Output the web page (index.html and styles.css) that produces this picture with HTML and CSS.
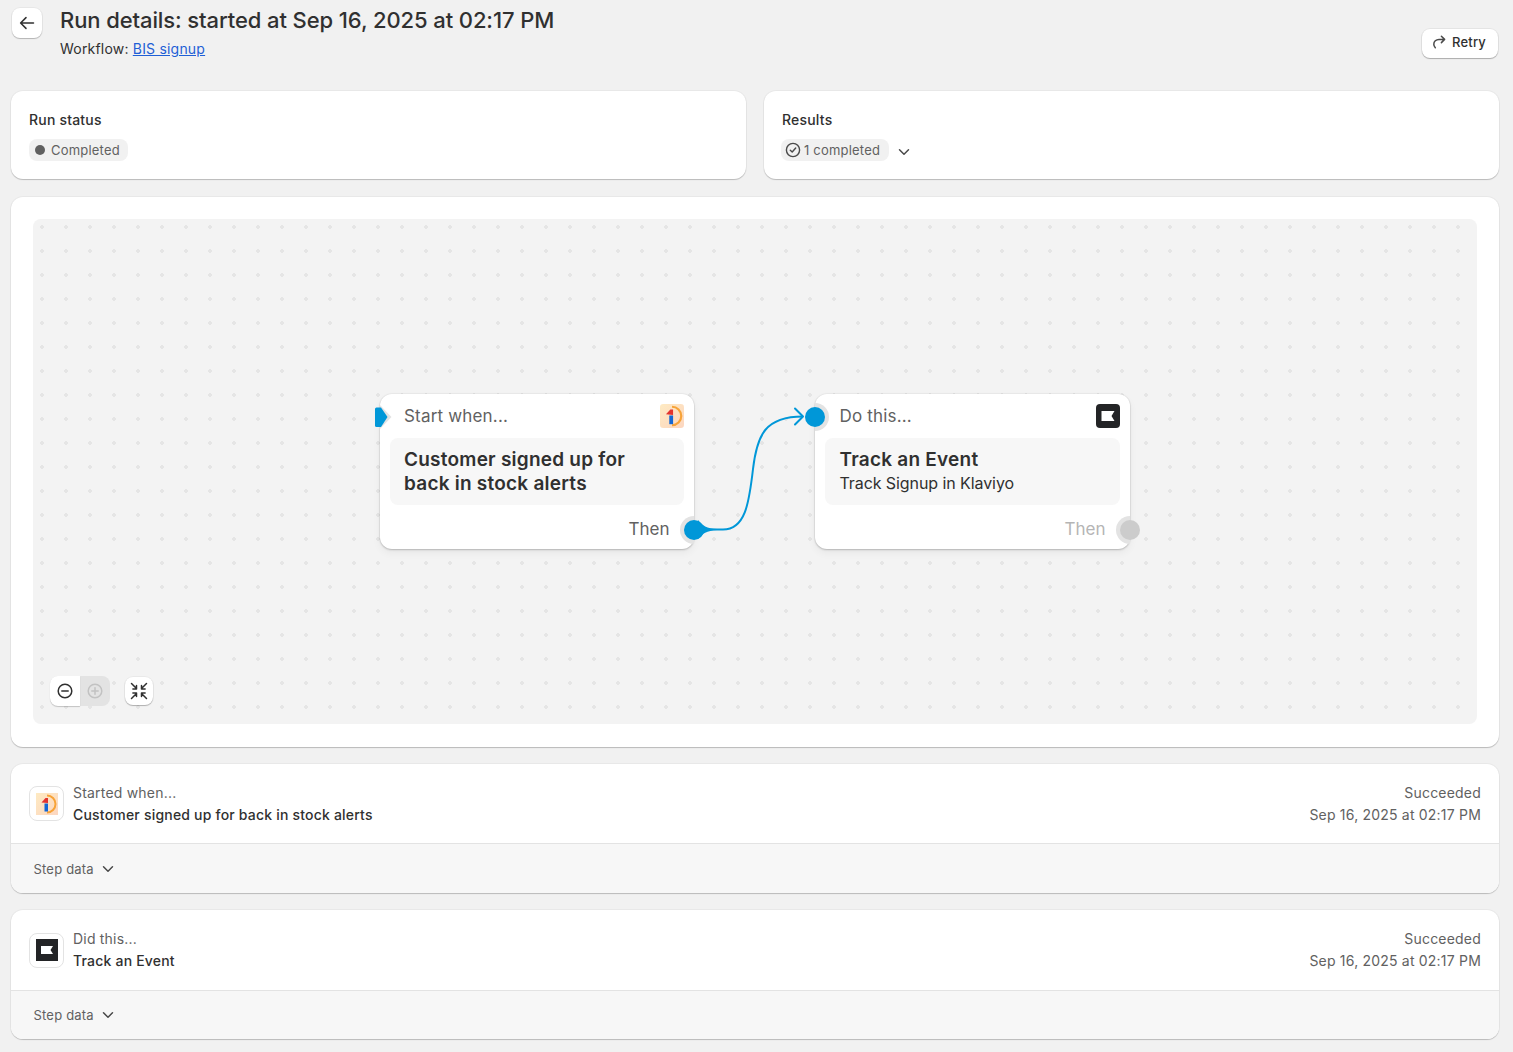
FILE: index.html
```html
<!DOCTYPE html>
<html lang="en">
<head>
<meta charset="utf-8">
<title>Run details</title>
<link rel="stylesheet" href="styles.css">
</head>
<body>
<main class="page">
  <header class="top">
    <button class="back" aria-label="Back">
      <svg viewBox="0 0 20 20" width="20" height="20"><path d="M16.500 10H3.800M9 4.600 3.600 10 9 15.400" fill="none" stroke="#303030" stroke-width="1.500" stroke-linecap="round" stroke-linejoin="round"/></svg>
    </button>
    <div class="heading">
      <h1>Run details: started at Sep 16, 2025 at 02:17 PM</h1>
      <p>Workflow: <a href="#">BIS signup</a></p>
    </div>
    <button class="retry">
      <svg viewBox="0 0 16 16" width="16" height="16"><path d="M13.400 5.400H8C5 5.400 2.800 7.500 2.800 10.200c0 1.400.6 2.600 1.500 3.500M10.400 2.200l3.200 3.200-3.200 3.200" fill="none" stroke="#4a4a4a" stroke-width="1.500" stroke-linecap="round" stroke-linejoin="round"/></svg>
      Retry
    </button>
  </header>

  <section class="summary">
    <div class="card info">
      <h2>Run status</h2>
      <div class="badge-row"><span class="badge"><i class="dot"></i>Completed</span></div>
    </div>
    <div class="card info">
      <h2>Results</h2>
      <div class="badge-row">
        <span class="badge badge-check">
          <svg viewBox="0 0 16 16" width="16" height="16"><circle cx="8" cy="8" r="6.600" fill="none" stroke="#4a4a4a" stroke-width="1.400"/><path d="M5.300 8.200 7.200 10l3.500-4" fill="none" stroke="#4a4a4a" stroke-width="1.400" stroke-linecap="round" stroke-linejoin="round"/></svg>1 completed
        </span>
        <svg class="chev" viewBox="0 0 12 8" width="12" height="8"><path d="M1.500 1.700 6 6.200l4.500-4.500" fill="none" stroke="#4a4a4a" stroke-width="1.500" stroke-linecap="round" stroke-linejoin="round"/></svg>
      </div>
    </div>
  </section>

  <section class="card canvas-card">
    <div class="canvas">
      <svg class="wire" width="1444" height="505" viewBox="0 0 1444 505">
        <path d="M662 310.500H690C712 310.500 716 285 720 250 724 216 732 197.500 770 197.500" fill="none" stroke="#0097d8" stroke-width="2"/>
        <path d="M665 301C669 306 674 310 684 310V311C674 311.500 669 315 665 320z" fill="#0097d8"/>
        <path d="M762 189.500l8 8-8 8" fill="none" stroke="#0097d8" stroke-width="2" stroke-linecap="round" stroke-linejoin="round"/>
      </svg>

      <article class="node node-start">
        <svg class="tag" viewBox="0 0 20 28" width="20" height="28"><path d="M7 2 18.500 14 7 26z" fill="#e3e3e3"/><path d="M3.500 4.500H8L14.500 14 8 24H3.500A1.500 1.500 0 0 1 2 22.500V6A1.500 1.500 0 0 1 3.500 4.500z" fill="#0097d8"/></svg>
        <div class="node-head">
          <span>Start when...</span>
          <svg class="app" viewBox="0 0 22 22" width="24" height="24"><defs><linearGradient id="logo-a" x1="0" y1="0" x2="1" y2="1"><stop offset="0" stop-color="#feeac2"/><stop offset="1" stop-color="#fcd6c0"/></linearGradient></defs><rect width="22" height="22" rx="3" fill="url(#logo-a)"/><path d="M11 2.500a8.500 8.500 0 1 1 0 17" fill="none" stroke="#f7a338" stroke-width="2"/><path d="M5.500 9.500 9.500 5H12v5z" fill="#e2332e"/><rect x="8.500" y="10.500" width="3.500" height="8" fill="#1467d4"/></svg>
        </div>
        <div class="node-body"><strong>Customer signed up for<br>back in stock alerts</strong></div>
        <div class="node-foot"><span>Then</span></div>
        <span class="port port-out"><i></i></span>
      </article>

      <article class="node node-do">
        <span class="port port-in"><i></i></span>
        <div class="node-head">
          <span>Do this...</span>
          <svg class="app" viewBox="0 0 24 24" width="24" height="24"><rect width="24" height="24" rx="4" fill="#232426"/><path d="M5.500 7h13l-3 5 3 5h-13z" fill="#fff"/></svg>
        </div>
        <div class="node-body"><strong>Track an Event</strong><em>Track Signup in Klaviyo</em></div>
        <div class="node-foot muted"><span>Then</span></div>
        <span class="port port-out off"><i></i></span>
      </article>

      <div class="zoom-group">
        <button class="zoom-btn" aria-label="Zoom out">
          <svg viewBox="0 0 20 20" width="20" height="20"><circle cx="10" cy="10" r="6.800" fill="none" stroke="#303030" stroke-width="1.500"/><path d="M6.800 10h6.400" stroke="#303030" stroke-width="1.500" stroke-linecap="round"/></svg>
        </button>
        <button class="zoom-btn off" aria-label="Zoom in">
          <svg viewBox="0 0 20 20" width="20" height="20"><circle cx="10" cy="10" r="6.800" fill="none" stroke="#c2c2c2" stroke-width="1.500"/><path d="M6.800 10h6.400M10 6.800v6.400" stroke="#c2c2c2" stroke-width="1.500" stroke-linecap="round"/></svg>
        </button>
      </div>
      <button class="fit" aria-label="Fit">
        <svg viewBox="0 0 20 20" width="20" height="20"><g fill="none" stroke="#303030" stroke-width="1.500" stroke-linecap="round" stroke-linejoin="round"><path d="M2.500 2.500 7 7M3.900 8h3.600V4.400"/><path d="M17.500 2.500 13 7M16.100 8h-3.600V4.400"/><path d="M2.500 17.500 7 13M3.900 12h3.600v3.600"/><path d="M17.500 17.500 13 13M16.100 12h-3.600v3.600"/></g></svg>
      </button>
    </div>
  </section>

  <section class="card step">
    <div class="step-main">
      <span class="step-icon">
        <svg viewBox="0 0 22 22" width="22" height="22"><defs><linearGradient id="logo-b" x1="0" y1="0" x2="1" y2="1"><stop offset="0" stop-color="#feeac2"/><stop offset="1" stop-color="#fcd6c0"/></linearGradient></defs><rect width="22" height="22" fill="url(#logo-b)"/><path d="M11 2.500a8.500 8.500 0 1 1 0 17" fill="none" stroke="#f7a338" stroke-width="2"/><path d="M5.500 9.500 9.500 5H12v5z" fill="#e2332e"/><rect x="8.500" y="10.500" width="3.500" height="8" fill="#1467d4"/></svg>
      </span>
      <div class="step-text"><span>Started when...</span><strong>Customer signed up for back in stock alerts</strong></div>
      <div class="step-meta"><span>Succeeded</span><span>Sep 16, 2025 at 02:17 PM</span></div>
    </div>
    <div class="step-foot">Step data
      <svg viewBox="0 0 12 8" width="12" height="8"><path d="M1.500 1.700 6 6.200l4.500-4.500" fill="none" stroke="#4a4a4a" stroke-width="1.500" stroke-linecap="round" stroke-linejoin="round"/></svg>
    </div>
  </section>

  <section class="card step">
    <div class="step-main tall">
      <span class="step-icon">
        <svg viewBox="0 0 22 22" width="22" height="22"><rect width="22" height="22" fill="#232426"/><path d="M5 7h12l-2.500 4 2.500 4H5z" fill="#fff"/></svg>
      </span>
      <div class="step-text"><span>Did this...</span><strong>Track an Event</strong></div>
      <div class="step-meta"><span>Succeeded</span><span>Sep 16, 2025 at 02:17 PM</span></div>
    </div>
    <div class="step-foot">Step data
      <svg viewBox="0 0 12 8" width="12" height="8"><path d="M1.500 1.700 6 6.200l4.500-4.500" fill="none" stroke="#4a4a4a" stroke-width="1.500" stroke-linecap="round" stroke-linejoin="round"/></svg>
    </div>
  </section>
</main>
</body>
</html>
```
FILE: styles.css
```css
* { box-sizing: border-box; }
html, body { margin: 0; padding: 0; }
body {
  background: #f1f1f1;
  color: #303030;
  font-family: Inter, "Liberation Sans", sans-serif;
  font-size: 14px;
  line-height: 20px;
  letter-spacing: .2px;
}
button { font: inherit; letter-spacing: inherit; color: inherit; cursor: pointer; }
.page { padding: 0 14px 13px 11px; display: flex; flex-direction: column; gap: 17px; }

.top { display: flex; align-items: flex-start; height: 74px; }
.back {
  width: 30px; height: 30px; margin-top: 8px; margin-left: 1px; padding: 0; border: 0; border-radius: 8px;
  background: #fff; display: flex; align-items: center; justify-content: center;
  box-shadow: 0 1px 1px rgba(0,0,0,.22), 0 0 0 1px rgba(0,0,0,.04);
}
.heading { margin-left: 18px; flex: 1; }
h1 { margin: 5px 0 0; font-size: 22px; line-height: 30px; font-weight: 500; letter-spacing: -.1px; color: #303030; }
.heading p { margin: 4px 0 0; font-size: 14px; line-height: 20px; }
.heading a { color: #1f5fd6; }
.retry {
  width: 76px; height: 29px; margin-top: 29px; margin-right: 1px; padding: 0 0 3px 9px; border: 0; border-radius: 8px;
  background: #fff; display: flex; align-items: center; gap: 5px;
  font-size: 13px; font-weight: 500;
  box-shadow: 0 1px 1px rgba(0,0,0,.25), 0 0 0 1px rgba(0,0,0,.05);
}

.card {
  background: #fff; border-radius: 12px;
  box-shadow: 0 1px 1px rgba(0,0,0,.2), 0 0 0 1px rgba(0,0,0,.035);
}
.summary { display: grid; grid-template-columns: 735px 735px; column-gap: 18px; margin-bottom: 1px; }
.info { height: 88px; padding: 19px 18px 0; }
h2 { margin: 0; font-size: 14px; line-height: 20px; font-weight: 500; }
.badge-row { display: flex; align-items: center; margin-top: 9px; }
.badge {
  height: 22px; border-radius: 8px; background: #f1f1f1; color: #616161;
  font-size: 13px; line-height: 22px; display: inline-flex; align-items: center; padding: 0 8px 0 6px;
}
.dot { width: 10px; height: 10px; border-radius: 50%; background: #616161; margin-right: 6px; }
.badge-check { padding: 0 9px 0 4px; gap: 3px; margin-left: -1px; }
.chev { margin-left: 9px; margin-top: 4px; }

.canvas-card { height: 550px; padding: 22px 22px 0; }
.canvas {
  position: relative; height: 505px; border-radius: 8px; background-color: #f3f3f3;
  background-image: radial-gradient(circle, #e5e5e5 1.700px, transparent 2.100px);
  background-size: 24px 24px; background-position: -3px -4px;
}
.wire { position: absolute; left: 0; top: 0; }
.node {
  position: absolute; top: 175px; width: 315px; height: 155px; background: #fff; border-radius: 12px;
  box-shadow: 0 1px 2px rgba(0,0,0,.2), 0 4px 8px rgba(0,0,0,.05), 0 0 0 1px rgba(0,0,0,.03);
  padding: 0 10px;
}
.node-start { left: 346.500px; width: 314.500px; }
.node-do { left: 782px; }
.node-head {
  height: 44px; padding: 0 0 0 14.500px; display: flex; align-items: center; justify-content: space-between;
  font-size: 17px; color: #616161; letter-spacing: .18px;
}
.app { display: block; }
.node-body {
  height: 67px; background: #f7f7f7; border-radius: 8px; padding: 10px 14.500px 0;
  font-size: 19px; line-height: 24px;
}
.node-body strong { display: block; font-weight: 600; color: #303030; font-size: 19px; letter-spacing: .23px; }
.node-body em { display: block; font-style: normal; font-size: 16px; line-height: 24px; letter-spacing: -.08px; margin-top: -1px; }
.node-foot {
  height: 44px; display: flex; align-items: center; justify-content: flex-end;
  padding: 3px 14.500px 0 0; font-size: 17px; color: #616161; letter-spacing: 0;
}
.node-foot.muted { color: #b5b5b5; }
.port { position: absolute; width: 20px; height: 20px; }
.port::before {
  content: ""; position: absolute; top: -4px; width: 14px; height: 28px; background: #e3e3e3;
}
.port i { position: absolute; inset: 0; border-radius: 50%; background: #0097d8; display: block; }
.port-in { left: -10px; top: 12.500px; }
.port-in::before { left: 10px; border-radius: 0 14px 14px 0; }
.port-out { right: -10px; top: 126px; }
.port-out::before { right: 10px; border-radius: 14px 0 0 14px; }
.port-out.off i { background: #cccccc; }
.tag { position: absolute; left: -7px; top: 8.500px; }

.zoom-group {
  position: absolute; left: 17px; top: 457px; width: 60px; height: 30px; display: flex;
  border-radius: 8px; background: #e3e3e3;
}
.zoom-btn {
  width: 30px; height: 30px; padding: 0; border: 0; background: #fff; border-radius: 8px 0 0 8px;
  display: flex; align-items: center; justify-content: center;
  box-shadow: 0 1px 1px rgba(0,0,0,.2);
}
.zoom-btn.off { background: transparent; box-shadow: none; }
.fit {
  position: absolute; left: 92px; top: 458px; width: 28px; height: 28px; padding: 0; border: 0;
  border-radius: 8px; background: #fff; display: flex; align-items: center; justify-content: center;
  box-shadow: 0 1px 1px rgba(0,0,0,.25), 0 0 0 1px rgba(0,0,0,.04);
}

.step { overflow: hidden; display: flex; flex-direction: column; height: 129px; }
.step-main { height: 80px; flex: none; display: flex; align-items: center; padding: 0 18px; border-bottom: 1px solid #e3e3e3; }
.step-main.tall { height: 81px; }
.step-icon {
  width: 35px; height: 35px; flex: none; border: 1px solid #e3e3e3; border-radius: 8px;
  display: flex; align-items: center; justify-content: center; background: #fff;
}
.step-text { margin-left: 9px; flex: 1; display: flex; flex-direction: column; gap: 2px; }
.step-text span { color: #616161; }
.step-text strong { font-weight: 500; }
.step-meta { display: flex; flex-direction: column; align-items: flex-end; gap: 2px; color: #616161; }
.step-foot {
  flex: 1; background: #f7f7f7; padding: 0 22.500px; display: flex; align-items: center; gap: 8px;
  font-size: 13px; color: #616161;
}
```
